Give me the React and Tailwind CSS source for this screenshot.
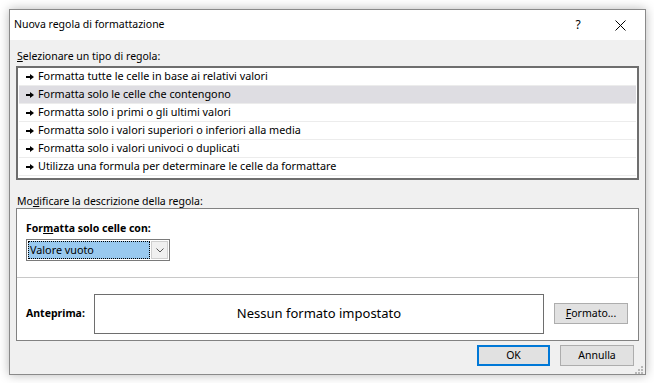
import React from "react";

const rules = [
  "Formatta tutte le celle in base ai relativi valori",
  "Formatta solo le celle che contengono",
  "Formatta solo i primi o gli ultimi valori",
  "Formatta solo i valori superiori o inferiori alla media",
  "Formatta solo i valori univoci o duplicati",
  "Utilizza una formula per determinare le celle da formattare",
];

function Bullet() {
  return (
    <svg width="9" height="6" viewBox="0 0 9 6" className="shrink-0">
      <rect x="0" y="2" width="5" height="2" fill="#000" />
      <path d="M4 0 L8 3 L4 6 Z" fill="#000" />
    </svg>
  );
}

export default function App() {
  return (
    <div
      className="w-[654px] h-[383px] bg-white pt-[9px] pl-[9px] text-[10.5px] text-black"
      style={{ fontFamily: '"Noto Sans", "Open Sans", sans-serif' }}
    >
      <div className="w-[637px] h-[366px] border border-[#8a8a8a] bg-[#f0f0f0] flex flex-col shadow-[0_0_10px_rgba(0,0,0,0.28)]">
        {/* title bar */}
        <div className="h-[30px] bg-white flex items-center pl-[4px] shrink-0 text-[10.5px]">
          <span className="flex-1">Nuova regola di formattazione</span>
          <span className="w-[20px] text-center mr-[27px] text-[12px]">?</span>
          <svg width="11" height="11" viewBox="0 0 11 11" className="mr-[19px]">
            <path d="M0.5 0.5 L10.5 10.5 M10.5 0.5 L0.5 10.5" stroke="#000" strokeWidth="1" />
          </svg>
        </div>

        <div className="flex-1 flex flex-col px-[6px] pt-[8px]">
          <div className="leading-[16px] pl-[1px]">
            <u>S</u>elezionare un tipo di regola:
          </div>
          <div className="mt-[2px] h-[114px] border-2 border-[#6e6e6e] bg-white px-[1px] flex flex-col text-[10.8px]">
            {rules.map((r, i) => (
              <div
                key={r}
                className={
                  "h-[18px] flex items-center gap-[3px] pl-[7px] border-b border-[#ececec] " +
                  (i === 1 ? "bg-[#dedde2]" : "")
                }
              >
                <Bullet />
                <span>{r}</span>
              </div>
            ))}
          </div>

          <div className="mt-[14px] leading-[14px] pl-[1px]">
            Mo<u>d</u>ificare la descrizione della regola:
          </div>
          <div className="h-[133px] border border-[#828282] bg-white flex flex-col">
            <div className="h-[69px] border-b border-[#c8c8c8] pl-[9px] pt-[11px]">
              <div className="font-bold leading-[16px]">
                For<u>m</u>atta solo celle con:
              </div>
              <div className="mt-[3px] w-[144px] h-[22px] border border-[#7a7a7a] flex p-[1px]">
                <div className="flex-1 bg-[#99c9ef] border border-dotted border-black flex items-center pl-[1px] leading-none text-[10.8px]">
                  Valore vuoto
                </div>
                <div className="w-[17px] ml-[1px] bg-[#f0f0f0] border border-[#cfcfcf] flex items-center justify-center">
                  <svg width="8" height="5" viewBox="0 0 8 5">
                    <path d="M0.5 0.5 L4 4 L7.5 0.5" stroke="#555" fill="none" strokeWidth="1" />
                  </svg>
                </div>
              </div>
            </div>
            <div className="flex-1 flex items-start pt-[16px] pl-[9px] pr-[10px]">
              <div className="h-[40px] w-[68px] shrink-0 flex items-center font-bold">Anteprima:</div>
              <div className="w-[450px] h-[40px] border border-[#6e6e6e] flex items-center justify-center text-[13px]">
                Nessun formato impostato
              </div>
              <button className="ml-[10px] mt-[9px] w-[74px] h-[21px] bg-[#e1e1e1] border border-[#adadad] flex items-center justify-center">
                <span><u>F</u>ormato...</span>
              </button>
            </div>
          </div>

          <div className="flex justify-end items-center gap-[10px] mt-[4px] pr-[5px] relative">
            <button className="w-[73px] h-[21px] bg-[#e1e1e1] border-2 border-[#0078d7] flex items-center justify-center">
              OK
            </button>
            <button className="w-[74px] h-[21px] bg-[#e1e1e1] border border-[#adadad] flex items-center justify-center">
              Annulla
            </button>
            <svg width="8" height="8" viewBox="0 0 8 8" className="absolute right-[-4px] bottom-[-8px]">
              <rect x="6" y="0" width="2" height="2" fill="#b8b8b8" />
              <rect x="3" y="3" width="2" height="2" fill="#b8b8b8" />
              <rect x="6" y="3" width="2" height="2" fill="#b8b8b8" />
              <rect x="0" y="6" width="2" height="2" fill="#b8b8b8" />
              <rect x="3" y="6" width="2" height="2" fill="#b8b8b8" />
              <rect x="6" y="6" width="2" height="2" fill="#b8b8b8" />
            </svg>
          </div>
        </div>
      </div>
    </div>
  );
}
